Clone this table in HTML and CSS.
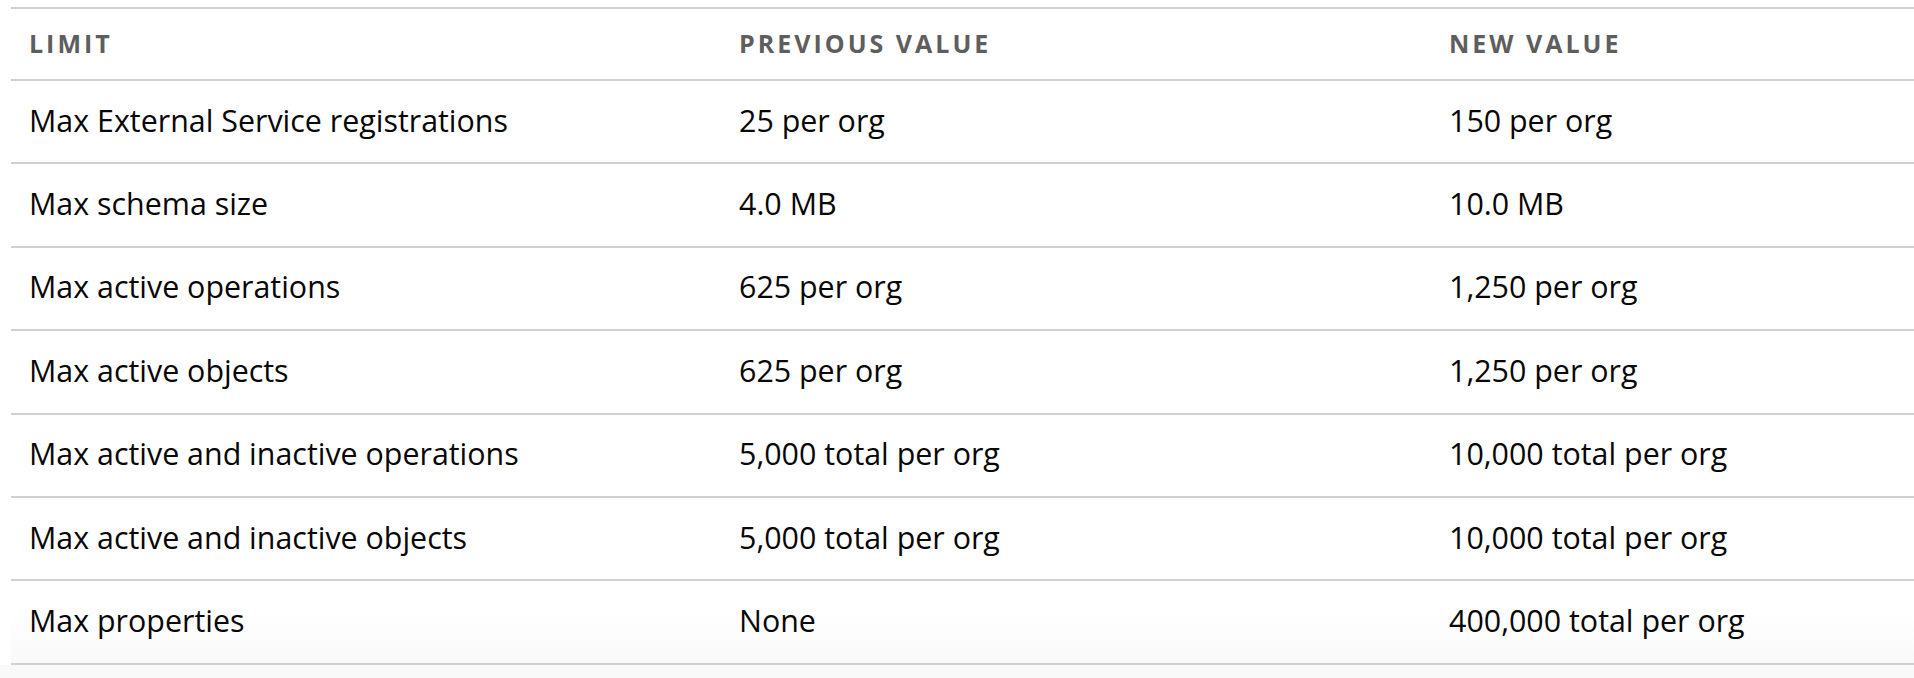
FILE: index.html
```html
<!DOCTYPE html>
<html lang="en">
<head>
<meta charset="utf-8">
<title>Limits</title>
<link rel="stylesheet" href="styles.css">
</head>
<body>
<div class="page">
  <div class="table">
    <div class="row head">
      <div class="cell">Limit</div>
      <div class="cell">Previous Value</div>
      <div class="cell">New Value</div>
    </div>
    <div class="row">
      <div class="cell">Max External Service registrations</div>
      <div class="cell">25 per org</div>
      <div class="cell">150 per org</div>
    </div>
    <div class="row">
      <div class="cell">Max schema size</div>
      <div class="cell">4.0 MB</div>
      <div class="cell">10.0 MB</div>
    </div>
    <div class="row">
      <div class="cell">Max active operations</div>
      <div class="cell">625 per org</div>
      <div class="cell">1,250 per org</div>
    </div>
    <div class="row">
      <div class="cell">Max active objects</div>
      <div class="cell">625 per org</div>
      <div class="cell">1,250 per org</div>
    </div>
    <div class="row">
      <div class="cell">Max active and inactive operations</div>
      <div class="cell">5,000 total per org</div>
      <div class="cell">10,000 total per org</div>
    </div>
    <div class="row">
      <div class="cell">Max active and inactive objects</div>
      <div class="cell">5,000 total per org</div>
      <div class="cell">10,000 total per org</div>
    </div>
    <div class="row last">
      <div class="cell">Max properties</div>
      <div class="cell">None</div>
      <div class="cell">400,000 total per org</div>
    </div>
  </div>
  <div class="footer"></div>
</div>
</body>
</html>
```
FILE: styles.css
```css
html, body {
  margin: 0;
  padding: 0;
  background: #ffffff;
}
body {
  font-family: "Open Sans", "Noto Sans", sans-serif;
  color: #080707;
}
.page {
  display: flex;
  flex-direction: column;
  min-height: 678px;
}
.table {
  margin: 7px 0 0 11px;
  border-top: 2px solid #d0d0d0;
  display: flex;
  flex-direction: column;
}
.row {
  display: grid;
  grid-template-columns: 710px 710px 1fr;
  border-bottom: 2px solid #d0d0d0;
  height: 81.4px;
  align-items: center;
}
.row.head {
  height: 70px;
}
.cell {
  padding: 0 18px 3px;
  font-size: 30.4px;
  white-space: nowrap;
}
.head .cell {
  font-size: 25px;
  font-weight: 700;
  text-transform: uppercase;
  letter-spacing: 3px;
  color: #5e5e5e;
}
.row.last {
  background: linear-gradient(#ffffff 40%, #f9f9f9);
}
.footer {
  flex: 1;
  background: #f9f9f9;
}
```
